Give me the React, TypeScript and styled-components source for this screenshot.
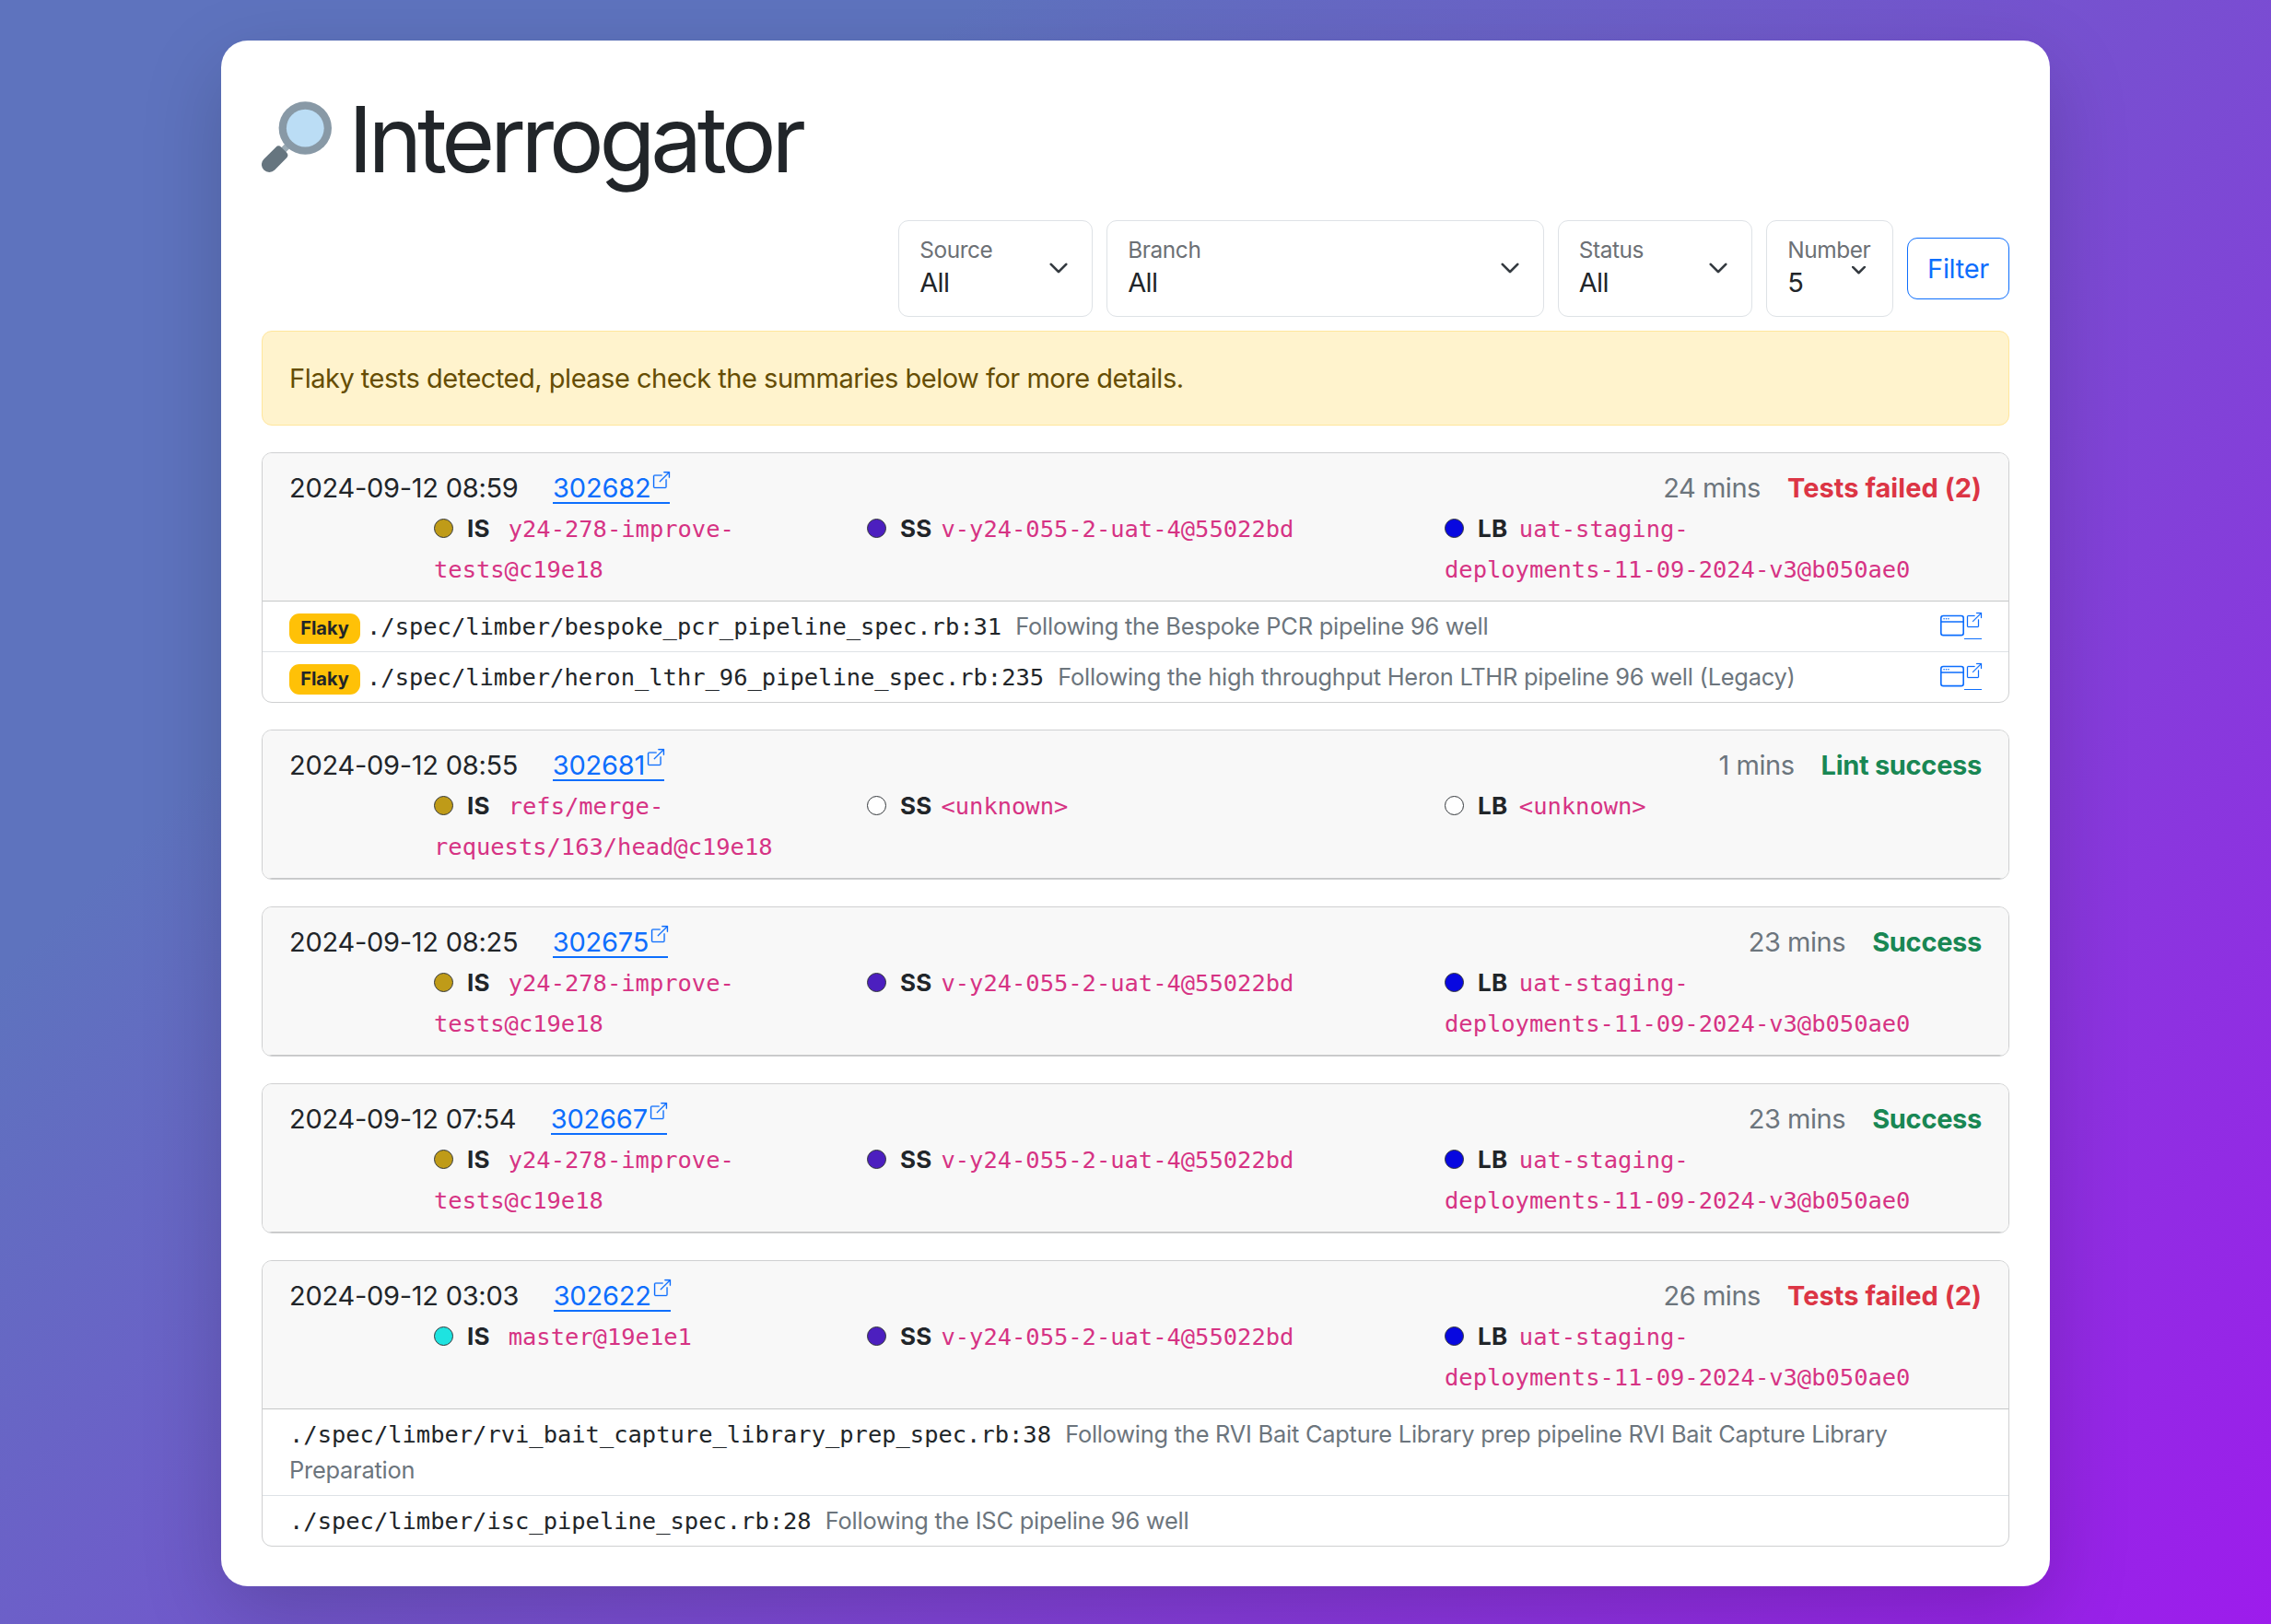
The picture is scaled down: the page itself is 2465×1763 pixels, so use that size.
import React, { Fragment } from 'react';
import styled, { createGlobalStyle } from 'styled-components';

const sans = `Inter, "Liberation Sans", sans-serif`;
const mono = `"DejaVu Sans Mono", "Liberation Mono", monospace`;

const GlobalStyle = createGlobalStyle`
  *, *::before, *::after { box-sizing: border-box; }
  body { margin: 0; font-family: ${sans}; font-size: 29px; line-height: 44px; color: #212529; }
`;

const Page = styled.div`
  min-height: 1763px;
  padding: 44px 240px 41px;
  background: linear-gradient(135deg, #5e73be 0%, #5e73be 25%, #9d1cec 100%);
`;

const Panel = styled.main`
  height: 1678px;
  padding: 44px;
  border-radius: 29px;
  background: #fff;
  box-shadow: 0 29px 87px rgba(0, 0, 0, 0.175);
`;

const Title = styled.h1`
  display: flex;
  align-items: flex-start;
  gap: 16px;
  height: 131px;
  margin: 0 0 20px;
  font-size: 99.5px;
  font-weight: 380;
  line-height: 126px;
  letter-spacing: -5.3px;
`;

const Lens = styled.svg`
  width: 78px;
  height: 78px;
  margin-top: 22px;
  flex: none;
`;

const Filters = styled.form`
  display: flex;
  justify-content: flex-end;
  align-items: center;
  gap: 15px;
  height: 105px;
  margin-bottom: 15px;
`;

const Select = styled.div<{ $width: number }>`
  display: flex;
  justify-content: space-between;
  width: ${p => p.$width}px;
  height: 105px;
  padding: 13px 22px;
  border: 1px solid #dee2e6;
  border-radius: 11px;
`;

const SelectText = styled.div`
  display: flex;
  flex-direction: column;
  width: 0;
`;

const SelectLabel = styled.span`
  font-size: 24.4px;
  line-height: 36px;
  letter-spacing: -0.4px;
  color: #6c7075;
`;

const SelectValue = styled.span`
  font-size: 29px;
  line-height: 36px;
  letter-spacing: -0.6px;
`;

const Chevron = styled.svg`
  width: 22px;
  height: 22px;
  margin: 27px 3px 0 0;
`;

const SmallChevron = styled.svg`
  width: 15px;
  height: 9px;
  margin: 36px 7px 0 0;
`;

const FilterButton = styled.button`
  width: 111px;
  height: 67px;
  padding: 0;
  border: 1px solid #0d6efd;
  border-radius: 11px;
  background: #fff;
  color: #0d6efd;
  font: 400 29px/40px ${sans};
  letter-spacing: -0.3px;
`;

const Alert = styled.div`
  height: 103px;
  margin-bottom: 29px;
  padding: 29px;
  border: 1px solid #ffe69c;
  border-radius: 11px;
  background: #fff3cd;
  color: #664d03;
  letter-spacing: -0.49px;
`;

const Card = styled.section`
  margin-bottom: 29px;
  border: 1px solid #cfd0d1;
  border-radius: 11px;
  overflow: hidden;
`;

const CardHead = styled.header`
  height: 161px;
  padding: 16px 29px 14px;
  background: #f8f8f8;
  border-bottom: 1px solid #c6c7c8;
`;

const Summary = styled.div`
  display: flex;
  height: 43px;
`;

const Stamp = styled.span`
  margin-right: 37.5px;
  letter-spacing: -0.26px;
`;

const PipelineLink = styled.a`
  display: flex;
  align-items: flex-start;
  gap: 3px;
  height: 39px;
  color: #0d6efd;
  border-bottom: 2px solid #0d6efd;
  letter-spacing: -0.2px;
  svg { margin-top: 4px; }
`;

const Duration = styled.span`
  margin-left: auto;
  margin-right: 29px;
  color: #6c757d;
  letter-spacing: -0.45px;
`;

const Outcome = styled.strong<{ $ok: boolean }>`
  font-weight: 700;
  letter-spacing: ${p => (p.$ok ? -0.3 : 0.05)}px;
  color: ${p => (p.$ok ? '#198754' : '#dc3545')};
`;

const Versions = styled.div`
  display: grid;
  grid-template-columns: 470px 627px 1fr;
  padding-left: 157px;
`;

const Version = styled.div`
  white-space: nowrap;
`;

const Dot = styled.i<{ $fill: string }>`
  display: inline-block;
  width: 21px;
  height: 21px;
  margin-right: 15px;
  border: 1px solid #33373b;
  border-radius: 50%;
  background: ${p => p.$fill};
  vertical-align: -1px;
`;

const AppName = styled.strong<{ $gap: number }>`
  margin-right: ${p => p.$gap}px;
  font-size: 26px;
  font-weight: 700;
  line-height: 1;
  letter-spacing: 0.2px;
`;

const Ref = styled.code`
  font-family: ${mono};
  font-size: 25.45px;
  line-height: 1;
  color: #d63384;
`;

const Failure = styled.div`
  display: flex;
  justify-content: space-between;
  padding: 7px 29px 8.5px;
  line-height: 38.5px;
  & + & { border-top: 1px solid #dee2e6; }
`;

const FailureText = styled.div`
  min-width: 0;
`;

const Badge = styled.span`
  display: inline-block;
  width: 77px;
  height: 33px;
  margin: -2px 7px -3px 0;
  border-radius: 11px;
  background: #ffc107;
  text-align: center;
  font-size: 20px;
  font-weight: 700;
  line-height: 33px;
`;

const SpecPath = styled.code`
  font-family: ${mono};
  font-size: 25.45px;
  line-height: 1;
`;

const Description = styled.span`
  margin-left: 7px;
  font-size: 25.4px;
  line-height: 1;
  letter-spacing: -0.23px;
  color: #6c757d;
`;

const Shots = styled.a`
  display: flex;
  height: 34px;
  color: #0d6efd;
`;

const WindowGlyph = styled.svg`
  width: 26px;
  height: 26px;
  margin-top: 6px;
`;

const ShotLink = styled.span`
  display: flex;
  width: 19px;
  padding: 5px 0 0 3px;
  border-bottom: 1px solid #0d6efd;
  svg { flex: none; }
`;

const BoxArrow = ({ size }: { size: number }) => (
  <svg width={size} height={size} viewBox="0 0 16 16" fill="currentColor" stroke="currentColor" strokeWidth="0.25" overflow="visible">
    <path fillRule="evenodd" d="M8.636 3.5a.5.5 0 0 0-.5-.5H1.5A1.5 1.5 0 0 0 0 4.5v10A1.5 1.5 0 0 0 1.5 16h10a1.5 1.5 0 0 0 1.5-1.5V7.864a.5.5 0 0 0-1 0V14.5a.5.5 0 0 1-.5.5h-10a.5.5 0 0 1-.5-.5v-10a.5.5 0 0 1 .5-.5h6.636a.5.5 0 0 0 .5-.5" />
    <path fillRule="evenodd" d="M16 .5a.5.5 0 0 0-.5-.5h-5a.5.5 0 0 0 0 1h3.793L6.146 9.146a.5.5 0 1 0 .708.708L15 1.707V5.5a.5.5 0 0 0 1 0z" />
  </svg>
);

const WindowIcon = () => (
  <WindowGlyph viewBox="0 0 16 16" fill="currentColor">
    <path d="M2.5 4a.5.5 0 1 0 0-1 .5.5 0 0 0 0 1m2-.5a.5.5 0 1 1-1 0 .5.5 0 0 1 1 0m1 .5a.5.5 0 1 0 0-1 .5.5 0 0 0 0 1" />
    <path d="M2 1a2 2 0 0 0-2 2v10a2 2 0 0 0 2 2h12a2 2 0 0 0 2-2V3a2 2 0 0 0-2-2zm13 2v2H1V3a1 1 0 0 1 1-1h12a1 1 0 0 1 1 1M2 14a1 1 0 0 1-1-1V6h14v7a1 1 0 0 1-1 1z" />
  </WindowGlyph>
);

const LensIcon = () => (
  <Lens viewBox="0 0 78 78">
    <path d="M21 55.500 31 45.500" stroke="#9aaab4" strokeWidth="7" />
    <circle cx="47.300" cy="29" r="28.700" fill="#8899a6" />
    <circle cx="47.300" cy="29.200" r="20.400" fill="#bbddf5" />
    <path fill="#66757f" d="M2.4 62.8 15.500 49.700Q18.300 47 21.200 49.800L27 55.600Q29.900 58.500 27 61.400L14.200 74.600A8.300 8.300 0 0 1 2.400 62.800Z" />
  </Lens>
);

type RefInfo = { color: string; lines: string[] };
type Spec = { path: string; text: string; flaky?: boolean };
type Pipeline = {
  time: string;
  id: string;
  mins: number;
  outcome: string;
  ok: boolean;
  refs: [RefInfo, RefInfo, RefInfo];
  specs?: Spec[];
};

const improve: RefInfo = { color: '#bf9b18', lines: ['y24-278-improve-', 'tests@c19e18'] };
const uat4: RefInfo = { color: '#4c1fbf', lines: ['v-y24-055-2-uat-4@55022bd'] };
const staging: RefInfo = { color: '#0808e0', lines: ['uat-staging-', 'deployments-11-09-2024-v3@b050ae0'] };
const unknown: RefInfo = { color: '#fff', lines: ['<unknown>'] };

const pipelines: Pipeline[] = [
  {
    time: '2024-09-12 08:59', id: '302682', mins: 24, outcome: 'Tests failed (2)', ok: false,
    refs: [improve, uat4, staging],
    specs: [
      { flaky: true, path: './spec/limber/bespoke_pcr_pipeline_spec.rb:31', text: 'Following the Bespoke PCR pipeline 96 well' },
      { flaky: true, path: './spec/limber/heron_lthr_96_pipeline_spec.rb:235', text: 'Following the high throughput Heron LTHR pipeline 96 well (Legacy)' },
    ],
  },
  {
    time: '2024-09-12 08:55', id: '302681', mins: 1, outcome: 'Lint success', ok: true,
    refs: [{ color: '#bf9b18', lines: ['refs/merge-', 'requests/163/head@c19e18'] }, unknown, unknown],
  },
  { time: '2024-09-12 08:25', id: '302675', mins: 23, outcome: 'Success', ok: true, refs: [improve, uat4, staging] },
  { time: '2024-09-12 07:54', id: '302667', mins: 23, outcome: 'Success', ok: true, refs: [improve, uat4, staging] },
  {
    time: '2024-09-12 03:03', id: '302622', mins: 26, outcome: 'Tests failed (2)', ok: false,
    refs: [{ color: '#1ee3e0', lines: ['master@19e1e1'] }, uat4, staging],
    specs: [
      { path: './spec/limber/rvi_bait_capture_library_prep_spec.rb:38', text: 'Following the RVI Bait Capture Library prep pipeline RVI Bait Capture Library Preparation' },
      { path: './spec/limber/isc_pipeline_spec.rb:28', text: 'Following the ISC pipeline 96 well' },
    ],
  },
];

const apps = [{ name: 'IS', gap: 20 }, { name: 'SS', gap: 10 }, { name: 'LB', gap: 12.5 }];

const filters = [
  { label: 'Source', value: 'All', width: 211 },
  { label: 'Branch', value: 'All', width: 474.5 },
  { label: 'Status', value: 'All', width: 211.5 },
  { label: 'Number', value: '5', width: 137.8, small: true },
];

export default function App() {
  return (
    <>
      <GlobalStyle />
      <Page>
        <Panel>
          <Title>
            <LensIcon />
            <span>Interrogator</span>
          </Title>
          <Filters>
            {filters.map(f => (
              <Select key={f.label} $width={f.width}>
                <SelectText>
                  <SelectLabel>{f.label}</SelectLabel>
                  <SelectValue>{f.value}</SelectValue>
                </SelectText>
                {f.small ? (
                  <SmallChevron viewBox="2 5.2 12 7.2">
                    <path d="m2 5 6 6 6-6" fill="none" stroke="#343a40" strokeWidth="2" strokeLinecap="round" strokeLinejoin="round" />
                  </SmallChevron>
                ) : (
                  <Chevron viewBox="0 0 16 16">
                    <path d="m2 5 6 6 6-6" fill="none" stroke="#343a40" strokeWidth="2" strokeLinecap="round" strokeLinejoin="round" />
                  </Chevron>
                )}
              </Select>
            ))}
            <FilterButton type="button">Filter</FilterButton>
          </Filters>
          <Alert>Flaky tests detected, please check the summaries below for more details.</Alert>
          {pipelines.map(p => (
            <Card key={p.id}>
              <CardHead>
                <Summary>
                  <Stamp>{p.time}</Stamp>
                  <PipelineLink>{p.id}<BoxArrow size={18} /></PipelineLink>
                  <Duration>{p.mins} mins</Duration>
                  <Outcome $ok={p.ok}>{p.outcome}</Outcome>
                </Summary>
                <Versions>
                  {p.refs.map((r, i) => (
                    <Version key={apps[i].name}>
                      <Dot $fill={r.color} />
                      <AppName $gap={apps[i].gap}>{apps[i].name}</AppName>
                      <Ref>
                        {r.lines.map((line, n) => (
                          <Fragment key={line}>{n > 0 && <br />}{line}</Fragment>
                        ))}
                      </Ref>
                    </Version>
                  ))}
                </Versions>
              </CardHead>
              {p.specs?.map(s => (
                <Failure key={s.path}>
                  <FailureText>
                    {s.flaky && <Badge>Flaky</Badge>}
                    <SpecPath>{s.path}</SpecPath>
                    {' '}
                    <Description>{s.text}</Description>
                  </FailureText>
                  {s.flaky && (
                    <Shots>
                      <WindowIcon />
                      <ShotLink><BoxArrow size={16} /></ShotLink>
                    </Shots>
                  )}
                </Failure>
              ))}
            </Card>
          ))}
        </Panel>
      </Page>
    </>
  );
}
